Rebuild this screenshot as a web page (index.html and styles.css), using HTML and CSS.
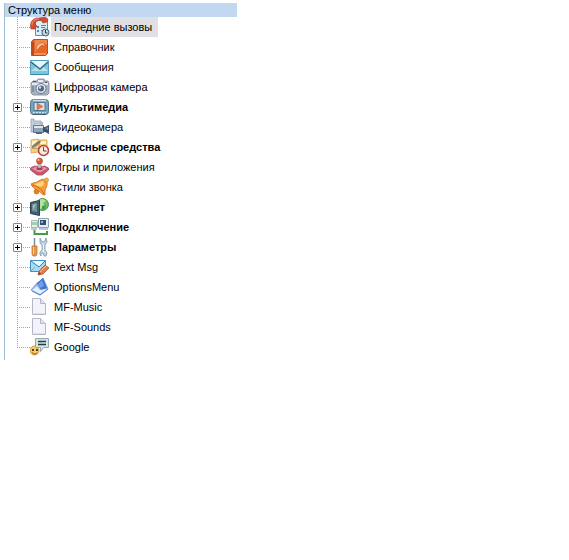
FILE: index.html
```html
<!DOCTYPE html>
<html lang="ru">
<head>
    <meta charset="UTF-8">
    <meta name="viewport" content="width=device-width, initial-scale=1.0">
    <title>Структура меню</title>
    <link rel="stylesheet" href="styles.css">
</head>
<body>
    <nav class="menu-panel" aria-labelledby="menu-title">
        <h1 class="menu-title" id="menu-title">Структура меню</h1>
        <ul class="tree">
            <li class="item">
                <span class="branch"></span>
                <svg class="icon" viewBox="0 0 20 20">
                    <path d="M5.500 3.500h12v15h-12z" fill="#dceef5" stroke="#5b8fa8"/>
                    <path d="M7 9h2v2H7zM11 8h5v1h-5zM11 10h4v1h-4zM7 13h2v2H7zM11 13h2v1h-2z" fill="#4e8ba5"/>
                    <path d="M1 12C-1 6 3 0 9 1l6-1 3 2-1 3-4 1-2-3C8 3 5 5 5 7l2 2-2 3z" fill="#d84a2b" stroke="#a83420" stroke-width=".6"/>
                    <path d="M2 8C2 4 5 2 9 2" fill="none" stroke="#f3a078"/>
                    <circle cx="15.500" cy="15.500" r="3.500" fill="#c5dce8" stroke="#385f78"/>
                    <path d="M15.500 13v3h2" fill="none" stroke="#243f50"/>
                </svg>
                <a class="label selected" href="#">Последние вызовы</a>
            </li>
            <li class="item">
                <span class="branch"></span>
                <svg class="icon" viewBox="0 0 20 20">
                    <path d="M1.500 4.500l2-2h14v14l-2 2h-14z" fill="#e8662a" stroke="#a0563c"/>
                    <path d="M2 5h2v13H2z" fill="#b94c22"/>
                    <path d="M5 3h12v4C12 7 9 10 5 15z" fill="#f08a4b"/>
                    <path d="M6 12c0-4 4-7 8-6l1 3-2 0-1-1-3 3-1 2z" fill="#f8c09a" stroke="#c94f20" stroke-width=".7"/>
                    <path d="M4 17h12" stroke="#ffb47d"/>
                </svg>
                <a class="label" href="#">Справочник</a>
            </li>
            <li class="item">
                <span class="branch"></span>
                <svg class="icon" viewBox="0 0 20 20">
                    <path d="M.5 3.500h18v14H.5z" fill="#7cc5dc" stroke="#5a9fb8"/>
                    <path d="M1 4h17l-8 8z" fill="#e6f6fa"/>
                    <path d="M1 14l6-5 3 3 3-3 5 5z" fill="#b4e2ee"/>
                    <path d="M1 5l9 7 8-7" fill="none" stroke="#2b6f8a" stroke-width="1.500"/>
                    <path d="M.5 17.500h18" stroke="#3f8ba6"/>
                </svg>
                <a class="label" href="#">Сообщения</a>
            </li>
            <li class="item">
                <span class="branch"></span>
                <svg class="icon" viewBox="0 0 20 20">
                    <path d="M1 6l2-2h4l1-2h6l1 2h3l1 2v10l-2 2H3l-2-2z" fill="#a9b3c0" stroke="#7b8694" stroke-width=".8"/>
                    <path d="M2 6h16v2H2z" fill="#e4eaf1"/>
                    <path d="M8 3h5v2H8z" fill="#e9eef5"/>
                    <path d="M3 4h3v1H3zM15 5h2v1h-2z" fill="#515766"/>
                    <circle cx="11" cy="11.500" r="5" fill="#e4e9f0" stroke="#697585"/>
                    <circle cx="11" cy="11.500" r="3" fill="#53647e"/>
                    <circle cx="10" cy="10.500" r="1.300" fill="#c5d9ee"/>
                    <path d="M2 9h2v6H2z" fill="#8390a2"/>
                </svg>
                <a class="label" href="#">Цифровая камера</a>
            </li>
            <li class="item">
                <span class="branch"><button class="toggle" type="button" aria-label="Развернуть Мультимедиа"></button></span>
                <svg class="icon" viewBox="0 0 20 20">
                    <rect x=".5" y="2.500" width="18" height="15" rx="3" fill="#7ba3bd" stroke="#54798f"/>
                    <path d="M3 3.500h13" stroke="#c5dfec" stroke-width="1.500"/>
                    <path d="M4 5.500h11v8H4z" fill="#cfe5f0" stroke="#4d7690"/>
                    <path d="M7 6l6 3.500L7 13z" fill="#ed7446" stroke="#c06038" stroke-width=".5"/>
                    <path d="M3 15.500h13" stroke="#d0e4ef" stroke-dasharray="2 1"/>
                    <path d="M3 17.500h13" stroke="#3b5f76"/>
                </svg>
                <a class="label group" href="#">Мультимедиа</a>
            </li>
            <li class="item">
                <span class="branch"></span>
                <svg class="icon" viewBox="0 0 20 20">
                    <path d="M1 2h3v2h7v3H4v8H1z" fill="#c3d0dc" stroke="#8a9cae" stroke-width=".7"/>
                    <path d="M3.500 8.500h10v7h-10z" fill="#8ea4b8" stroke="#61778e"/>
                    <path d="M4 9h9v2H4z" fill="#dce7ef"/>
                    <path d="M13 10l2 0 4-2v9l-4-2h-2z" fill="#3b5168"/>
                    <path d="M15 11l3-1v3z" fill="#7993aa"/>
                    <path d="M6 15h6v2H6z" fill="#51677d"/>
                    <path d="M11 5h2v3h-2z" fill="#a5b7c7"/>
                </svg>
                <a class="label" href="#">Видеокамера</a>
            </li>
            <li class="item">
                <span class="branch"><button class="toggle" type="button" aria-label="Развернуть Офисные средства"></button></span>
                <svg class="icon" viewBox="0 0 20 20">
                    <path d="M1 3l7-1 1 1h8v12l-8 1-1-1-7 1z" fill="#f2cf7a" stroke="#cfa25c" stroke-width=".8"/>
                    <path d="M2 4l6-1v4l-4 3-2 0zM10 4h6v3h-6z" fill="#fff0c5"/>
                    <path d="M9 3v11M2 11.500h7" stroke="#c99a54"/>
                    <path d="M2 9l6-5 3 0-1 2-5 4-3 1z" fill="#827b78"/>
                    <circle cx="13.500" cy="13.500" r="5" fill="#fce9e4" stroke="#b8403d" stroke-width="1.500"/>
                    <path d="M13.500 10v4h3" fill="none" stroke="#8c3134"/>
                </svg>
                <a class="label group" href="#">Офисные средства</a>
            </li>
            <li class="item">
                <span class="branch"></span>
                <svg class="icon" viewBox="0 0 20 20">
                    <path d="M.5 11l4-2 5 1 5-1 4 2v2l-6 5H7L.5 13z" fill="#cb5470" stroke="#a34a60" stroke-width=".8"/>
                    <path d="M2 11.500l3-1.500 5 1 4-1 3 1.500-6 3.500H8z" fill="#ee92a4"/>
                    <ellipse cx="9.500" cy="11.500" rx="3" ry="1.500" fill="#9e394d"/>
                    <path d="M8 6h3v5H8z" fill="#c2c5cc" stroke="#747882" stroke-width=".5"/>
                    <circle cx="9.500" cy="4" r="3" fill="#e8562f" stroke="#aa3b26" stroke-width=".6"/>
                    <circle cx="8.500" cy="3" r="1" fill="#ffc29b"/>
                </svg>
                <a class="label" href="#">Игры и приложения</a>
            </li>
            <li class="item">
                <span class="branch"></span>
                <svg class="icon" viewBox="0 0 20 20">
                    <circle cx="6.500" cy="14.500" r="2.500" fill="#e8812b" stroke="#c4631c" stroke-width=".6"/>
                    <path d="M1 7l2-1c4 0 6-3 10-4l4 3c1 4-2 6-2 10l0 3c-3 0-4-2-6-4-3-2-7-3-8-7z" fill="#f3a03a" stroke="#cf6f22" stroke-width=".8"/>
                    <path d="M4 7c4 0 6-3 9-3l1 3c-2 4-5 3-10 0z" fill="#ffd777"/>
                    <path d="M2 8c5 1 10 4 12 9" fill="none" stroke="#c9651d"/>
                    <circle cx="16.500" cy="3" r="2" fill="#f7b64c" stroke="#d27a25" stroke-width=".7"/>
                </svg>
                <a class="label" href="#">Стили звонка</a>
            </li>
            <li class="item">
                <span class="branch"><button class="toggle" type="button" aria-label="Развернуть Интернет"></button></span>
                <svg class="icon" viewBox="0 0 20 20">
                    <circle cx="12.500" cy="7.500" r="6" fill="#71ba65" stroke="#4c9553"/>
                    <path d="M9 4c2-3 5-2 7 0l-3 2 2 3-4 3-3-2z" fill="#b7e29d"/>
                    <path d="M12 9l4-1-1 4-3 1z" fill="#459b51"/>
                    <path d="M.5 5.500l9-2v15l-9-2z" fill="#465d6d" stroke="#2b414f"/>
                    <path d="M2 7l5-1v9l-5-1z" fill="#6f9199"/>
                    <path d="M3 8l3-1-3 6z" fill="#a1c3bd"/>
                </svg>
                <a class="label group" href="#">Интернет</a>
            </li>
            <li class="item">
                <span class="branch"><button class="toggle" type="button" aria-label="Развернуть Подключение"></button></span>
                <svg class="icon" viewBox="0 0 20 20">
                    <path d="M1.500 3.500h6v7h-6z" fill="#e8eff1" stroke="#a8b8bf"/>
                    <path d="M2 5h5v3H2z" fill="#a9cbb0"/>
                    <path d="M8.500 1.500h10v9h-10z" fill="#e4eef6" stroke="#91a4b4"/>
                    <path d="M10 3h6v5h-6z" fill="#33536c"/>
                    <path d="M11 4h2v2h-2z" fill="#91b9d2"/>
                    <path d="M1 11h6v2H1zM9 11h9v2H9z" fill="#b9c8d1"/>
                    <path d="M4.500 13v4H18" fill="none" stroke="#4f9a48" stroke-width="2"/>
                    <path d="M16 14h2v4h-2z" fill="#4f9a48"/>
                </svg>
                <a class="label group" href="#">Подключение</a>
            </li>
            <li class="item">
                <span class="branch"><button class="toggle" type="button" aria-label="Развернуть Параметры"></button></span>
                <svg class="icon" viewBox="0 0 20 20">
                    <path d="M4.500 1v8" stroke="#7d8f9c" stroke-width="1.500"/>
                    <path d="M2 9h5v8l-1 2H3l-1-2z" fill="#eb9645" stroke="#c27232" stroke-width=".8"/>
                    <path d="M3.500 10v7" stroke="#ffd28c"/>
                    <path d="M10 1v5l2 2v5l-2 2v3l1 1v-2l2-1 1 3 2 0 1-3-2-3V8l2-3-1-4-1 3-3 1z" fill="#c2d5e0" stroke="#7d97a9" stroke-width=".8"/>
                    <path d="M13.500 7v8" stroke="#f0f7fb"/>
                </svg>
                <a class="label group" href="#">Параметры</a>
            </li>
            <li class="item">
                <span class="branch"></span>
                <svg class="icon" viewBox="0 0 20 20">
                    <path d="M.5 3.500h15v11H.5z" fill="#a7daf5" stroke="#438fc0"/>
                    <path d="M1 4h14L9 10z" fill="#e7f7ff"/>
                    <path d="M1 4l8 6 6-6" fill="none" stroke="#307daf"/>
                    <path d="M1 14l4-4" stroke="#6cb1da"/>
                    <path d="M8 18l1-4 6-6 4 3-6 6z" fill="#df8052" stroke="#ad5a3a" stroke-width=".8"/>
                    <path d="M10 15l6-6" stroke="#ffc091"/>
                    <path d="M8 18l1-3 2 2z" fill="#6e4836"/>
                </svg>
                <a class="label" href="#">Text Msg</a>
            </li>
            <li class="item">
                <span class="branch"></span>
                <svg class="icon" viewBox="0 0 20 20">
                    <path d="M1 13L7 6l2-1 4-4 5 11-8 6z" fill="#8fb4e8" stroke="#6f96d0" stroke-width=".8"/>
                    <path d="M7 6l6-5 4 10-6 2z" fill="#3f75cf"/>
                    <path d="M8 7l4-4 2 6-4 2z" fill="#6fa0ec"/>
                    <path d="M2 13l5-4 3 4 7-1-7 5z" fill="#e4effc"/>
                    <path d="M2 14l8 4 8-6" fill="none" stroke="#5782c4"/>
                </svg>
                <a class="label" href="#">OptionsMenu</a>
            </li>
            <li class="item">
                <span class="branch"></span>
                <svg class="icon" viewBox="0 0 20 20">
                    <path d="M2.500 1.500h8l5 5v11h-13z" fill="#f3f4fb" stroke="#b4b6c6"/>
                    <path d="M10.500 1.500v5h5" fill="#dde0ed" stroke="#b4b6c6"/>
                    <path d="M4 16.500h11" stroke="#dfe1ee"/>
                </svg>
                <a class="label" href="#">MF-Music</a>
            </li>
            <li class="item">
                <span class="branch"></span>
                <svg class="icon" viewBox="0 0 20 20">
                    <path d="M2.500 1.500h8l5 5v11h-13z" fill="#f3f4fb" stroke="#b4b6c6"/>
                    <path d="M10.500 1.500v5h5" fill="#dde0ed" stroke="#b4b6c6"/>
                    <path d="M4 16.500h11" stroke="#dfe1ee"/>
                </svg>
                <a class="label" href="#">MF-Sounds</a>
            </li>
            <li class="item">
                <span class="branch"></span>
                <svg class="icon" viewBox="0 0 20 20">
                    <circle cx="4.500" cy="13.500" r="4.500" fill="#f6cd62" stroke="#c28a37" stroke-width=".8"/>
                    <path d="M5.500 1.500h13v9h-5l-3 4v-4h-5z" fill="#d5e4e3" stroke="#93a9ab"/>
                    <path d="M8 4.500h8M8 7.500h8" stroke="#263d46" stroke-width="1.500"/>
                    <path d="M2 12h2v2H2zM6 12h2v2H6z" fill="#4b3c24"/>
                    <path d="M2 15.500c2 2 4 2 5 0" fill="none" stroke="#8c5427"/>
                </svg>
                <a class="label" href="#">Google</a>
            </li>
        </ul>
    </nav>
</body>
</html>
```
FILE: styles.css
```css
body {
    margin: 3px 4px;
    background-color: #fff;
    color: #000;
    font-family: 'Liberation Sans', Arial, sans-serif;
    font-size: 11px;
}

.menu-panel {
    box-sizing: border-box;
    max-width: 233px;
    border-left: 1px solid #9ebbd5;
}

.menu-title {
    margin: 0;
    padding-left: 3px;
    background-color: #c1d8f0;
    font-size: 11px;
    font-weight: normal;
    line-height: 14px;
}

.tree {
    margin: 0;
    padding: 0 0 3px;
    list-style: none;
}

.item {
    display: flex;
    height: 20px;
}

/* Dotted guide lines between the rows */
.branch {
    box-sizing: border-box;
    flex: none;
    width: 25px;
    padding: 6px 0 0 8px;
    background-image:
        repeating-linear-gradient(to bottom, #a5a5a5 0 1px, transparent 1px 2px),
        repeating-linear-gradient(to right, #a5a5a5 0 1px, transparent 1px 2px);
    background-position: 12px 0, 12px 10px;
    background-size: 1px 100%, 13px 1px;
    background-repeat: no-repeat;
}

/* The vertical line stops at the last row */
.item:last-child .branch {
    background-size: 1px 11px, 13px 1px;
}

/* Plus sign in a box */
.toggle {
    display: block;
    width: 9px;
    height: 9px;
    padding: 0;
    border: 1px solid #848484;
    border-radius: 1px;
    background:
        linear-gradient(#000, #000) center / 5px 1px no-repeat,
        linear-gradient(#000, #000) center / 1px 5px no-repeat,
        #fff;
    cursor: pointer;
}

.icon {
    flex: none;
    width: 20px;
    height: 20px;
}

.label {
    margin-left: 1px;
    padding: 0 6px 0 3px;
    color: #000;
    line-height: 20px;
    text-decoration: none;
    white-space: nowrap;
}

.selected {
    background-color: #e0dfe3;
}

.group {
    font-weight: bold;
}
```
